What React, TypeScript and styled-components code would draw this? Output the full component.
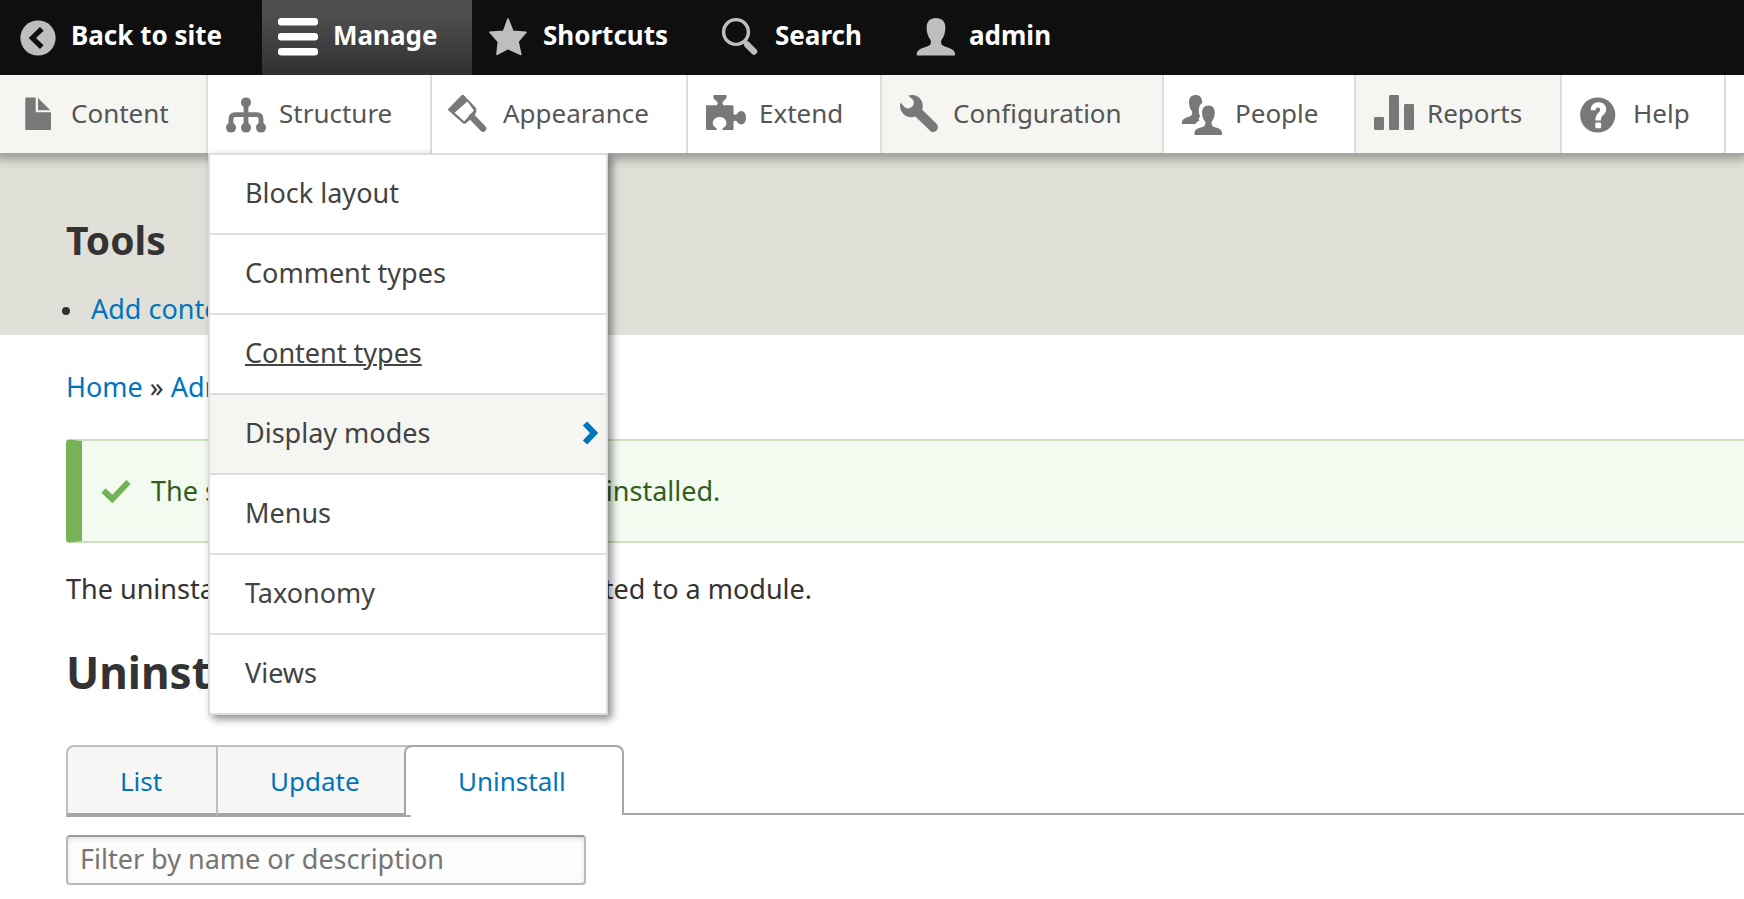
import React from 'react';
import styled, { createGlobalStyle, css } from 'styled-components';

const GlobalStyle = createGlobalStyle`
  *, *::before, *::after { box-sizing: border-box; }
  html { overflow-x: hidden; }
  body {
    margin: 0;
    background: #fff;
    color: #333;
    font: 27px/36px "Noto Sans", "Open Sans", sans-serif;
  }
  ul { list-style: none; margin: 0; padding: 0; }
  h1, h2, p { margin: 0; }
  a { color: #0074bd; text-decoration: none; }
`;

/* Administration bar */

const Bar = styled.nav`
  background: #0f0f0f;
`;

const BarList = styled.ul`
  display: flex;
  height: 75px;
`;

const BarItem = styled.li<{ $width: number }>`
  flex: 0 0 ${(p) => p.$width}px;
`;

const BarLink = styled.a<{ $active?: boolean }>`
  display: flex;
  align-items: center;
  gap: 15px;
  height: 100%;
  padding-left: 16px;
  color: #fff;
  font-size: 26px;
  font-weight: 700;
  white-space: nowrap;
  ${(p) =>
    p.$active &&
    css`
      background: linear-gradient(#4e4e4e 20%, #303030);
    `}
`;

const Icon = styled.svg`
  flex: none;
  width: 40px;
  height: 40px;
  overflow: visible;
`;

const Label = styled.span`
  padding-bottom: 5px;
`;

/* Menu tray */

const Tray = styled.nav`
  position: relative;
  z-index: 1;
  background: #fff;
  border-bottom: 2px solid #a6a6a6;
  box-shadow: -2px 0 10px 4px rgba(0, 0, 0, 0.33);
  clip-path: inset(0 0 -700px 0);
`;

const TrayList = styled.ul`
  display: flex;
  height: 78px;
`;

const TrayItem = styled.li<{ $width: number; $shaded?: boolean }>`
  position: relative;
  flex: 0 0 ${(p) => p.$width}px;
  border-right: 2px solid #ddd;
  background: ${(p) => (p.$shaded ? '#f5f5f2' : '#fff')};
`;

const TrayLink = styled.a`
  display: flex;
  align-items: center;
  gap: 13px;
  height: 100%;
  padding: 2px 0 0 18px;
  color: #565656;
  font-size: 26px;
  white-space: nowrap;
`;

const Submenu = styled.ul`
  position: absolute;
  top: 78px;
  left: 0;
  width: 400px;
  border: 2px solid #ddd;
  border-bottom: 0;
  background: #fff;
  box-shadow: 4px 4px 8px rgba(0, 0, 0, 0.45);
`;

const SubmenuItem = styled.li<{ $shaded?: boolean }>`
  height: 80px;
  border-bottom: 2px solid #ddd;
  background: ${(p) => (p.$shaded ? '#f5f5f2' : '#fff')};
`;

const SubmenuLink = styled.a<{ $hovered?: boolean }>`
  display: flex;
  align-items: center;
  justify-content: space-between;
  height: 100%;
  padding: 0 8px 3px 35px;
  color: #434343;
  text-decoration: ${(p) => (p.$hovered ? 'underline' : 'none')};
  text-decoration-thickness: 2px;
`;

const Chevron = styled.svg`
  width: 16px;
  height: 24px;
`;

/* Page */

const Header = styled.header`
  padding: 61px 66px 8px;
  background: #e0e0d8;
`;

const BlockTitle = styled.h2`
  margin-bottom: 27px;
  font-size: 39px;
  line-height: 48px;
`;

const ToolList = styled.ul`
  display: flex;
  flex-direction: column;
`;

const ToolItem = styled.li`
  display: flex;
  align-items: center;
  gap: 21px;
  margin-left: -4px;

  &::before {
    content: '';
    width: 8px;
    height: 8px;
    margin-top: 4px;
    border-radius: 50%;
    background: #333;
  }
`;

const Main = styled.main`
  padding: 34px 0 14px 66px;
`;

const Message = styled.div`
  display: flex;
  align-items: center;
  gap: 20px;
  min-height: 104px;
  margin: 34px 0 28px;
  padding-left: 19px;
  border: 2px solid #c9e1bd;
  border-width: 2px 0 2px 16px;
  border-left-color: #77b259;
  border-radius: 4px 0 0 4px;
  background: #f3faef;
  color: #325e1c;
`;

const Check = styled.svg`
  flex: none;
  width: 30px;
  height: 24px;
`;

const PageTitle = styled.h1`
  margin: 38px 0 46px;
  font-size: 44px;
  line-height: 54px;
`;

const Tabs = styled.ul`
  display: flex;
  height: 72px;
  margin-bottom: 18px;

  &::after {
    content: '';
    flex: 1;
    height: 70px;
    margin-left: -2px;
    border-bottom: 2px solid #a6a6a6;
  }
`;

const Tab = styled.li<{ $width: number; $current?: boolean }>`
  flex: 0 0 ${(p) => p.$width}px;
  height: 72px;
  border: 2px solid #bfbfbf;
  border-right: 0;
  border-bottom: 4px solid #a6a6a6;
  background: #f6f6f4;

  &:first-child {
    border-top-left-radius: 8px;
  }

  ${(p) =>
    p.$current &&
    css`
      position: relative;
      height: 70px;
      margin-left: -7px;
      border: 2px solid #a6a6a6;
      border-bottom: 0;
      border-radius: 8px 8px 0 0;
      background: #fff;
    `}
`;

const TabLink = styled.a`
  display: block;
  padding-left: 52px;
  font-size: 26px;
  line-height: 68px;
`;

const FilterInput = styled.input`
  display: block;
  width: 520px;
  max-width: 100%;
  height: 50px;
  padding: 0 12px 3px;
  border: 2px solid #b8b8b8;
  border-top-color: #999;
  border-radius: 4px;
  background: #fcfcfa;
  box-shadow: inset 0 2px 4px rgba(0, 0, 0, 0.12);
  color: #333;
  font: inherit;

  &::placeholder {
    color: #757575;
    opacity: 1;
  }
`;

/* Icons, each on a 40 × 40 grid */

const icons = {
  back: (
    <>
      <circle cx="22" cy="20" r="17.6" fill="#bebebe" />
      <path d="M25.8 10.8 16.4 20l9.4 9.2" fill="none" stroke="#0f0f0f" strokeWidth="5.2" />
    </>
  ),
  menu: (
    <g fill="#fff">
      <rect y="0" width="40" height="7.5" rx="3.2" />
      <rect y="15" width="40" height="7.5" rx="3.2" />
      <rect y="30" width="40" height="7.5" rx="3.2" />
    </g>
  ),
  star: (
    <path
      d="M20 1 24.9 13.2 38 14.2 30 23.6 32.8 36.4 20 30.5 9 36.4 10.4 23.6 2 14.2 15.6 13.2Z"
      fill="#bebebe"
      stroke="#bebebe"
      strokeWidth="1.6"
      strokeLinejoin="round"
    />
  ),
  search: (
    <g fill="none" stroke="#bebebe">
      <circle cx="16" cy="14" r="12.4" strokeWidth="3.4" />
      <path d="M24 23l4.5 4" strokeWidth="4.5" />
      <path d="M27.5 27 34 33.5" strokeWidth="6.4" strokeLinecap="round" />
    </g>
  ),
  person: (
    <path
      d="M22 0C16 0 12.6 3.6 12.6 9.6c0 5.2 1.4 9.6 4 12.4.6 2.6.4 4.2-1 5.2C12.4 29.6 2.8 30 2.8 35.800v1.700H41v-1.700c0-5.800-9.400-6.200-12.600-8.600-1.400-1-1.600-2.600-1-5.200 2.600-2.800 4-7.200 4-12.400C31.400 3.600 28 0 22 0Z"
      fill="#bebebe"
    />
  ),
  content: (
    <path
      d="M8.3 2.5h9.4v14.8H33V34a1 1 0 0 1-1 1H8.3a1 1 0 0 1-1-1V3.5a1 1 0 0 1 1-1ZM20 3v12.3h12.3Z"
      fill="#787878"
    />
  ),
  structure: (
    <g fill="#787878">
      <circle cx="20" cy="7.4" r="5" />
      <circle cx="5" cy="32.6" r="5" />
      <circle cx="20" cy="32.6" r="5" />
      <circle cx="35" cy="32.6" r="5" />
      <path
        d="M20 8v24M5 31v-7q0-4.300 4.300-4.300h21.400q4.300 0 4.300 4.300v7"
        fill="none"
        stroke="#787878"
        strokeWidth="4.8"
      />
    </g>
  ),
  appearance: (
    <g fill="#787878">
      <path
        fillRule="evenodd"
        d="M11.6.2q1.100-1 2.200 0L25.400 12.200q2 2 .9 4.200L24.400 21 16 28.200q-1.400 1.200-2.800.2L-1.500 15.600q-1-.9-.1-1.900ZM17.300 6.500 4.600 17.800 14.200 26.200 23.900 15.400Z"
      />
      <path d="M22 22 33 33.600" stroke="#787878" strokeWidth="6.6" strokeLinecap="round" />
    </g>
  ),
  extend: (
    <path
      d="M0 10.300h10.600c1.600-1.400 1.200-3 0-4.200C8.200 4.600 7.300 3 7.300 1.400Q7.300 0 8.800 0h10.400q1.500 0 1.500 1.400c0 1.600-1.200 3.200-3.300 4.700-1.200 1.200-1.200 3 .2 4.200H26.300q1.200 0 1.200 1.200v7.600c1 1.200 2.800.8 3.700-.4 1-1.800 2.300-2.700 4.300-2.700 2.700 0 4.500 3 4.500 6.700s-1.800 6.600-4.500 6.600c-2 0-3.300-.8-4.300-2.600-.9-1.200-2.700-1.400-3.700-.2V35H16.600c-.6-1.200.4-2.200 1.800-3 1.300-.9 2-2 2-3.700 0-3.600-3-6.200-6.800-6.200s-6.800 2.600-6.800 6.200c0 1.700.8 2.800 2.100 3.700 1.400.8 2.200 1.800 1.600 3H1.200Q0 35 0 33.800Z"
      fill="#787878"
    />
  ),
  configuration: (
    <path
      d="M8.200.6C13.400-1 18.600.8 21 4.800c2 3.400 2.200 6.200 1.200 10L36.400 28.600c2 2 2 5 .2 6.900s-4.800 1.900-6.800-.1L15.400 21.600C10.600 22.800 6.400 22 3.400 19 .4 16-.6 11.800.4 7.600L5 12.400c2.200 1.400 4.200 1.200 6 .2 1.800-1.200 2.800-2.800 2.800-5C13.800 5.800 13 4.800 11.800 3.800Z"
      fill="#787878"
    />
  ),
  people: (
    <g fill="#787878">
      <path d="M13.600 0C9.200 0 7 2.800 7 7.200c0 3.800 1 6.800 2.900 8.900.5 2 .4 3.500-.7 4.400C6.600 22.400 0 22.800 0 27.400v1.600h13.600c.8-1.800 2.400-2.800 4-3.400-1.400-1.600-1-3 .6-4.200-1.200-2.200-1.600-5-1.200-8 .4-2.600 1.400-4.400 3.200-5.400C20.200 2.600 18 0 13.600 0Z" />
      <path d="M26.500 10.600c-4.200 0-6.400 2.800-6.400 7 0 3.800 1.100 6.900 3 9 .5 2 .3 3.400-.8 4.300-2.600 1.900-9.800 2.100-9.800 6.900V40H40v-2.200c0-4.800-6.800-5-9.400-6.900-1.100-.9-1.300-2.300-.8-4.300 1.900-2.100 3-5.200 3-9 0-4.200-2.100-7-6.300-7Z" />
    </g>
  ),
  reports: (
    <g fill="#787878">
      <rect x="0" y="22" width="10" height="13" rx="1.2" />
      <rect x="15" y="0" width="10" height="35" rx="1.2" />
      <rect x="30" y="9" width="10" height="26" rx="1.2" />
    </g>
  ),
  help: (
    <>
      <circle cx="17.7" cy="20" r="17.6" fill="#787878" />
      <path
        d="M10.600 15.200C11 10 13.800 7.200 18.400 7.200c4.800 0 7.800 2.800 7.800 6.800 0 6-5.400 5.800-5.400 11.400h-5.400c0-7 4.800-7.400 4.800-10.800 0-1.400-.8-2.200-2.200-2.200-1.600 0-2.200 1-2.400 2.800Z"
        fill="#fff"
      />
      <rect x="15.300" y="27.600" width="5.800" height="5.600" rx="1.200" fill="#fff" />
    </>
  ),
};

type IconName = keyof typeof icons;

const barItems: { label: string; icon: IconName; width: number; active?: boolean }[] = [
  { label: 'Back to site', icon: 'back', width: 262 },
  { label: 'Manage', icon: 'menu', width: 210, active: true },
  { label: 'Shortcuts', icon: 'star', width: 232 },
  { label: 'Search', icon: 'search', width: 194 },
  { label: 'admin', icon: 'person', width: 194 },
];

const trayItems: { label: string; icon: IconName; width: number; shaded?: boolean }[] = [
  { label: 'Content', icon: 'content', width: 208, shaded: true },
  { label: 'Structure', icon: 'structure', width: 224 },
  { label: 'Appearance', icon: 'appearance', width: 256 },
  { label: 'Extend', icon: 'extend', width: 194 },
  { label: 'Configuration', icon: 'configuration', width: 282, shaded: true },
  { label: 'People', icon: 'people', width: 192 },
  { label: 'Reports', icon: 'reports', width: 206, shaded: true },
  { label: 'Help', icon: 'help', width: 164 },
];

const structureItems = [
  'Block layout',
  'Comment types',
  'Content types',
  'Display modes',
  'Menus',
  'Taxonomy',
  'Views',
];

function StructureMenu() {
  return (
    <Submenu>
      {structureItems.map((label) => (
        <SubmenuItem key={label} $shaded={label === 'Display modes'}>
          <SubmenuLink href="#" $hovered={label === 'Content types'}>
            {label}
            {label === 'Display modes' && (
              <Chevron viewBox="0 0 16 24" aria-hidden="true">
                <path d="M3 2.500 12 12 3 21.500" fill="none" stroke="#0074bd" strokeWidth="6" />
              </Chevron>
            )}
          </SubmenuLink>
        </SubmenuItem>
      ))}
    </Submenu>
  );
}

export default function App() {
  return (
    <>
      <GlobalStyle />
      <Bar aria-label="Administration">
        <BarList>
          {barItems.map((item) => (
            <BarItem key={item.label} $width={item.width}>
              <BarLink href="#" $active={item.active}>
                <Icon viewBox="0 0 40 40" aria-hidden="true">
                  {icons[item.icon]}
                </Icon>
                <Label>{item.label}</Label>
              </BarLink>
            </BarItem>
          ))}
        </BarList>
      </Bar>
      <Tray aria-label="Manage">
        <TrayList>
          {trayItems.map((item) => (
            <TrayItem key={item.label} $width={item.width} $shaded={item.shaded}>
              <TrayLink href="#">
                <Icon viewBox="0 0 40 40" aria-hidden="true">
                  {icons[item.icon]}
                </Icon>
                <Label>{item.label}</Label>
              </TrayLink>
              {item.label === 'Structure' && <StructureMenu />}
            </TrayItem>
          ))}
        </TrayList>
      </Tray>
      <Header>
        <BlockTitle>Tools</BlockTitle>
        <ToolList>
          <ToolItem>
            <a href="#">Add content</a>
          </ToolItem>
        </ToolList>
      </Header>
      <Main>
        <nav aria-label="Breadcrumb">
          <a href="#">Home</a> » <a href="#">Administration</a>
        </nav>
        <Message role="status">
          <Check viewBox="0 0 30 24" aria-hidden="true">
            <path d="M2.500 11.500 11.300 20 27.500 3" fill="none" stroke="#73b355" strokeWidth="6" />
          </Check>
          The selected modules have been uninstalled.
        </Message>
        <p>The uninstall process removes all data related to a module.</p>
        <PageTitle>Uninstall</PageTitle>
        <Tabs>
          <Tab $width={150}>
            <TabLink href="#">List</TabLink>
          </Tab>
          <Tab $width={195}>
            <TabLink href="#">Update</TabLink>
          </Tab>
          <Tab $width={220} $current>
            <TabLink href="#" aria-current="page">
              Uninstall
            </TabLink>
          </Tab>
        </Tabs>
        <FilterInput
          type="search"
          aria-label="Filter by name or description"
          placeholder="Filter by name or description"
        />
      </Main>
    </>
  );
}
